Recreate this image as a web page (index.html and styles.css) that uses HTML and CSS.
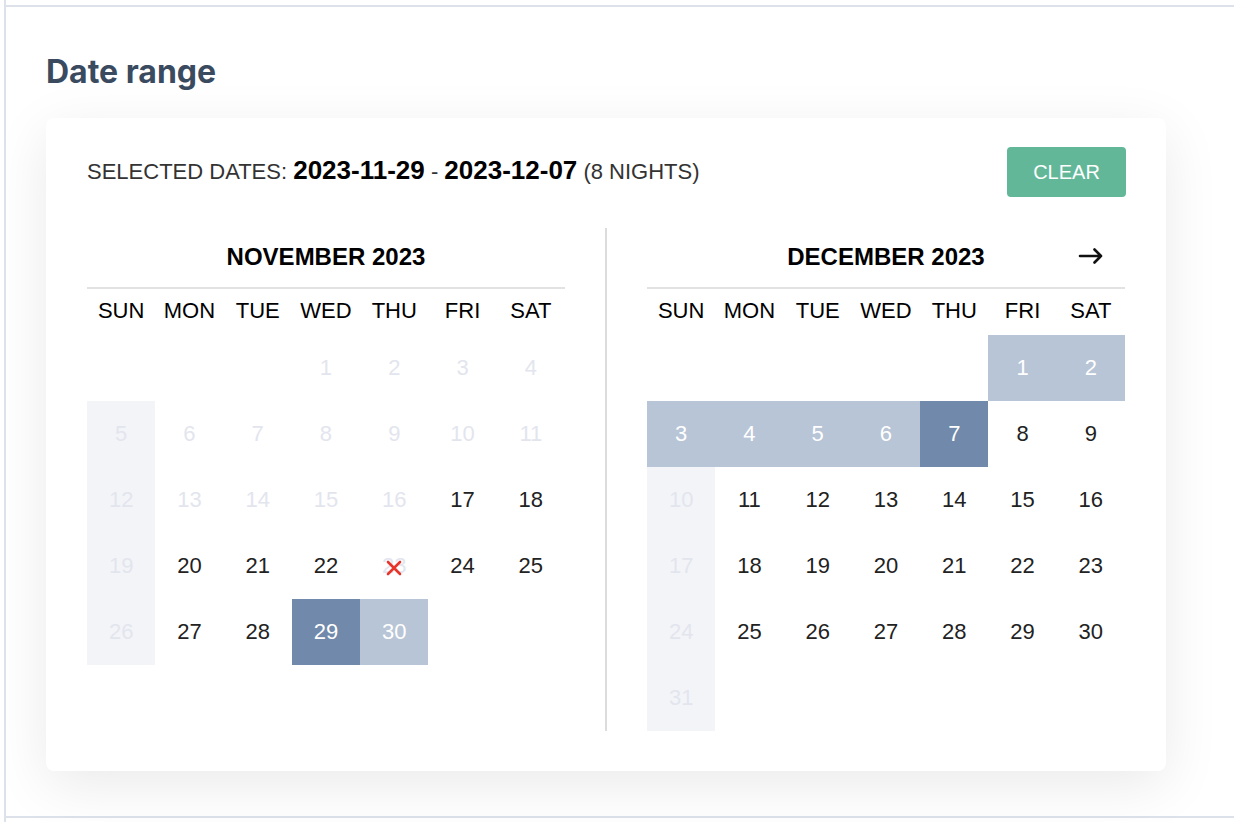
FILE: index.html
```html
<!DOCTYPE html>
<html lang="en">
<head>
  <meta charset="UTF-8" />
  <title>Date range</title>
  <link rel="stylesheet" href="styles.css">
</head>
<body>
  <div class="frame">
    <section class="panel">
      <h2 class="panel-title">Date range</h2>

      <div class="picker">
        <div class="picker-head">
          <div class="selected">SELECTED DATES: <b>2023-11-29</b> - <b>2023-12-07</b> (8 NIGHTS)</div>
          <button class="clear-btn">CLEAR</button>
        </div>

        <div class="months">
          <div class="month">
            <div class="month-head">
              <div class="month-name">NOVEMBER 2023</div>
            </div>
            <div class="weekdays">
              <div>SUN</div><div>MON</div><div>TUE</div><div>WED</div><div>THU</div><div>FRI</div><div>SAT</div>
            </div>
            <div class="days">
              <div class="day"></div><div class="day"></div><div class="day"></div>
              <div class="day off">1</div><div class="day off">2</div><div class="day off">3</div><div class="day off">4</div>

              <div class="day off blocked">5</div><div class="day off">6</div><div class="day off">7</div><div class="day off">8</div>
              <div class="day off">9</div><div class="day off">10</div><div class="day off">11</div>

              <div class="day off blocked">12</div><div class="day off">13</div><div class="day off">14</div><div class="day off">15</div>
              <div class="day off">16</div><div class="day">17</div><div class="day">18</div>

              <div class="day off blocked">19</div><div class="day">20</div><div class="day">21</div><div class="day">22</div>
              <div class="day off booked">23
                <svg class="cross" width="16" height="16" viewBox="0 0 16 16"><path d="M2 2L14 14M14 2L2 14" stroke="#e8352b" stroke-width="2.6" stroke-linecap="round"/></svg>
              </div>
              <div class="day">24</div><div class="day">25</div>

              <div class="day off blocked">26</div><div class="day">27</div><div class="day">28</div>
              <div class="day edge">29</div><div class="day range">30</div>
            </div>
          </div>

          <div class="divider"></div>

          <div class="month">
            <div class="month-head">
              <div class="month-name">DECEMBER 2023</div>
              <button class="next">
                <svg width="26" height="20" viewBox="0 0 26 20"><path d="M2 10H23M16.5 3.5L23 10L16.5 16.5" fill="none" stroke="#111" stroke-width="2.6" stroke-linecap="round" stroke-linejoin="round"/></svg>
              </button>
            </div>
            <div class="weekdays">
              <div>SUN</div><div>MON</div><div>TUE</div><div>WED</div><div>THU</div><div>FRI</div><div>SAT</div>
            </div>
            <div class="days">
              <div class="day"></div><div class="day"></div><div class="day"></div><div class="day"></div><div class="day"></div>
              <div class="day range">1</div><div class="day range">2</div>

              <div class="day range">3</div><div class="day range">4</div><div class="day range">5</div><div class="day range">6</div>
              <div class="day edge">7</div><div class="day">8</div><div class="day">9</div>

              <div class="day off blocked">10</div><div class="day">11</div><div class="day">12</div><div class="day">13</div>
              <div class="day">14</div><div class="day">15</div><div class="day">16</div>

              <div class="day off blocked">17</div><div class="day">18</div><div class="day">19</div><div class="day">20</div>
              <div class="day">21</div><div class="day">22</div><div class="day">23</div>

              <div class="day off blocked">24</div><div class="day">25</div><div class="day">26</div><div class="day">27</div>
              <div class="day">28</div><div class="day">29</div><div class="day">30</div>

              <div class="day off blocked">31</div>
            </div>
          </div>
        </div>
      </div>
    </section>
  </div>
</body>
</html>
```

FILE: styles.css
```css
body {
  margin: 0;
  background: #fff;
  font-family: "Liberation Sans", Arial, sans-serif;
  color: #222;
}
.frame {
  margin-left: 4px;
  height: 822px;
  padding-top: 5px;
  box-sizing: border-box;
  border-left: 2px solid #dde1ea;
  overflow: hidden;
}
.panel {
  height: 813px;
  box-sizing: border-box;
  padding: 46px 0 0 40px;
  border-top: 2px solid #dde1ea;
  border-bottom: 2px solid #dde1ea;
}
.panel-title {
  margin: 0 0 27px;
  font-family: Inter, "Noto Sans", sans-serif;
  font-size: 32px;
  line-height: 38px;
  font-weight: 700;
  color: #3a4a5f;
}
.picker {
  width: 1120px;
  box-sizing: border-box;
  padding: 29px 41px 40px;
  background: #fff;
  border-radius: 8px;
  box-shadow: 0 14px 56px rgba(0,0,0,0.085);
}
.picker-head {
  display: flex;
  justify-content: space-between;
  align-items: center;
  height: 50px;
}
.selected {
  padding-bottom: 4px;
  font-size: 22px;
  color: #333;
}
.selected b {
  color: #000;
  font-size: 26px;
}
.clear-btn {
  width: 119px;
  height: 50px;
  margin-right: -1px;
  border: none;
  border-radius: 4px;
  background: #62b798;
  color: #fff;
  font-family: "Liberation Sans", Arial, sans-serif;
  font-size: 20px;
}
.months {
  display: grid;
  grid-template-columns: 478px 2px 478px;
  column-gap: 40px;
  margin-top: 31px;
}
.divider {
  background: #dcdcdc;
}
.month-head {
  display: grid;
  grid-template-columns: repeat(7, 1fr);
  align-items: center;
  height: 59px;
  border-bottom: 2px solid #e2e2e2;
}
.month-name {
  grid-column: 2 / 7;
  margin-top: -2px;
  text-align: center;
  font-size: 24px;
  font-weight: 700;
  color: #000;
}
.next {
  grid-column: 7;
  justify-self: center;
  margin-top: -3px;
  padding: 0;
  border: none;
  background: none;
  display: flex;
}
.weekdays {
  display: grid;
  grid-template-columns: repeat(7, 1fr);
  align-items: center;
  height: 46px;
  padding-bottom: 2px;
  box-sizing: border-box;
  text-align: center;
  font-size: 22px;
  color: #000;
}
.days {
  display: grid;
  grid-template-columns: repeat(7, 1fr);
  grid-auto-rows: 66px;
}
.day {
  display: flex;
  align-items: center;
  justify-content: center;
  font-size: 22px;
  color: #222;
}
.day.off {
  color: #e3e5ee;
}
.day.blocked {
  background: #f3f4f8;
}
.day.range {
  background: #b8c5d6;
  color: #fff;
}
.day.edge {
  background: #7189aa;
  color: #fff;
}
.day.booked {
  position: relative;
}
.cross {
  position: absolute;
  left: 50%;
  top: 50%;
  margin: -6px 0 0 -8px;
}
```
